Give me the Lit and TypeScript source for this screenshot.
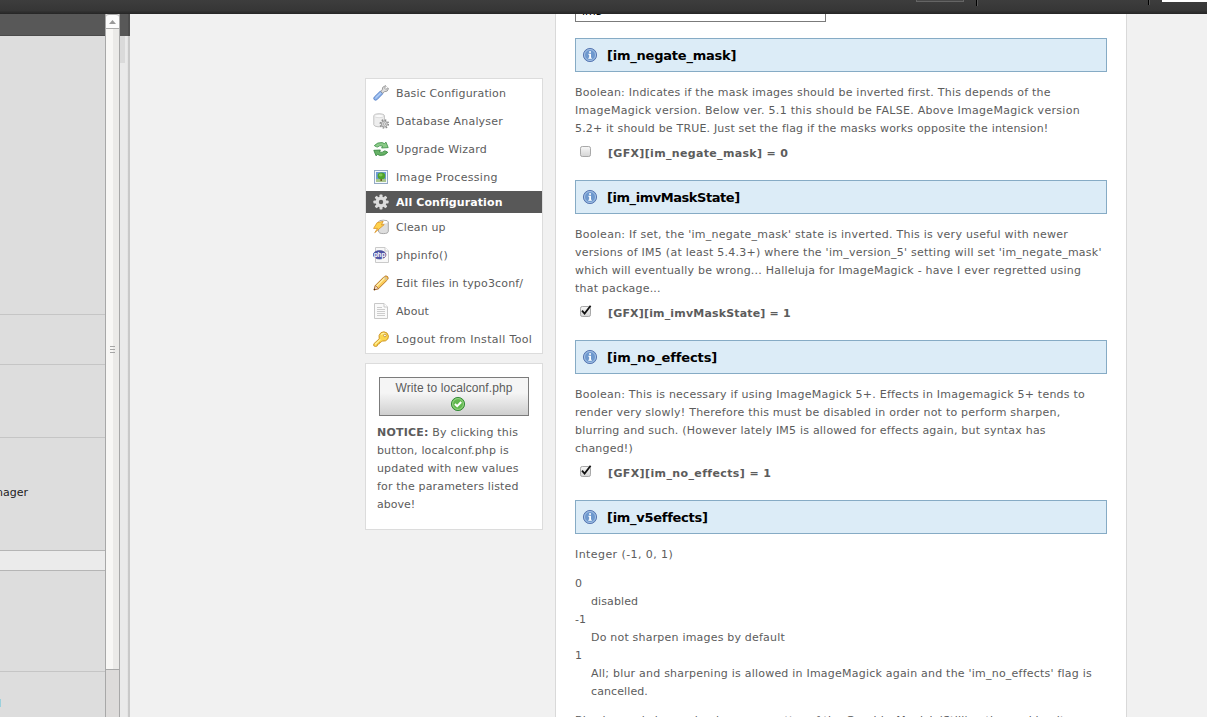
import { LitElement, html, css, svg } from "lit";
import { customElement, property } from "lit/decorators.js";
import { styleMap } from "lit/directives/style-map.js";

const icons: Record<string, unknown> = {
  wrench: svg`<path d="M1.2 12.2 L7.3 6.2 L9.8 8.7 L3.8 14.8 Q2.4 15.6 1.2 14.6 Q.3 13.4 1.2 12.2Z" fill="#8fb5ec" stroke="#5a82c8"/><path d="M2.5 13 L7.8 7.9" stroke="#c5dcfa"/><path d="M7.8 6.4 L9.2 4.9 Q8.6 1.8 12.6 .6 L13.2 1.2 L11.5 3 L12.8 4.4 L15 2.8 L15.6 3.4 Q15 7 11.2 6.8 L9.7 8.2Z" fill="#dedede" stroke="#8c8c8c" stroke-width=".8"/>`,
  database: svg`<path d="M.8 3 Q1 .8 6 .8 Q11.4 .8 11.4 3 V12.3 Q9 14.2 5 13.8 Q.8 13.3 .8 11.8Z" fill="#eee" stroke="#c2c2c2"/><ellipse cx="6.1" cy="3" rx="4.7" ry="1.7" fill="#fafafa" stroke="#ccc" stroke-width=".6"/><circle cx="11.3" cy="11" r="4" fill="none" stroke="#8d8d8d" stroke-width="1.6" stroke-dasharray="1.57 1.57"/><circle cx="11.3" cy="11" r="3" fill="#ddd" stroke="#8d8d8d" stroke-width=".8"/><circle cx="11.3" cy="11" r="1.2" fill="#fff" stroke="#888" stroke-width=".7"/>`,
  refresh: svg`<path d="M1.3 4.6 Q4.5 .9 9.2 1.6 L11.4 2.6 L13 1.2 L15.2 6.6 L8.6 7 L9.6 5.2 Q6.8 3.6 4.6 6 Q3.4 6.2 1.3 4.6Z" fill="#8bcb88" stroke="#3a8b42" stroke-width=".8"/><path d="M14.8 11.3 Q11.6 15.2 6.8 14.4 L4.6 13.4 L3 14.8 L.8 9.3 L7.4 9 L6.4 10.8 Q9.2 12.4 11.4 9.9 Q12.6 9.7 14.8 11.3Z" fill="#67b266" stroke="#2f8139" stroke-width=".8"/>`,
  image: svg`<rect x="1.5" y="1.5" width="13" height="13" fill="#f4f8fc" stroke="#93a9c4"/><rect x="3" y="3" width="10" height="10" fill="#6e9cd6"/><path d="M3 10 H13 V13 H3Z" fill="#a9c58c"/><path d="M7.4 9 H9 V12 H7.4Z" fill="#6b5e28"/><ellipse cx="8.4" cy="6.9" rx="3.8" ry="3.3" fill="#4ea32c"/><ellipse cx="7.7" cy="6" rx="1.9" ry="1.4" fill="#80c852"/>`,
  gear: svg`<g fill="#ddd"><circle cx="8" cy="8" r="5.4"/>${[0, 45, 90, 135, 180, 225, 270, 315].map((a) => svg`<rect x="6.5" y=".4" width="3" height="4" rx=".8" transform="rotate(${a} 8 8)"/>`)}</g><circle cx="8" cy="8" r="2.2" fill="#595959"/>`,
  cleanup: svg`<path d="M5.5 3 Q5.5 1.2 10.3 1.2 Q15.3 1.2 15.3 3 V12.2 Q15.3 14.6 10.3 14.6 Q5.5 14.6 5.5 12Z" fill="#dedede" stroke="#a8a8a8"/><ellipse cx="10.4" cy="3.2" rx="4.2" ry="1.4" fill="#fff"/><path d="M4.2 3.6 L10.2 2.4 L8.4 5.8 L11.2 5.6 L1.8 13.6 L4.6 9.4 L.6 9.4Z" fill="#ffd24c" stroke="#dc9a30" stroke-width=".9"/>`,
  php: svg`<path d="M2.5 .5 H12 L15.5 4 V15.5 H2.5Z" fill="#f8f8f8" stroke="#cacaca"/><path d="M12 .5 V4 H15.5" fill="#fff" stroke="#cacaca"/><ellipse cx="6.6" cy="7.8" rx="6.4" ry="4.2" fill="#4f55a6" stroke="#3a3f8e" stroke-width=".6"/><text x="6.6" y="9.8" text-anchor="middle" font-family="Liberation Sans" font-size="6.5" font-weight="700" fill="#fff">php</text>`,
  pencil: svg`<path d="M1 15 L2.4 10.4 L11.2 1.6 Q13 .2 14.6 1.6 Q15.9 3.2 14.4 4.9 L5.6 13.6Z" fill="#fbcb58" stroke="#b06c1d" stroke-width=".9"/><path d="M3.5 11.2 L11.7 3" stroke="#fff0a8" stroke-width="1.4"/><path d="M11 1.8 L14.2 5" stroke="#d3c3a0" stroke-width="1.5"/><path d="M2.4 10.4 L5.6 13.6 L1 15Z" fill="#f3dcc4" stroke="#9d6030" stroke-width=".7"/><path d="M.8 15.2 L1.4 13.4 L2.6 14.6Z" fill="#332111"/>`,
  page: svg`<path d="M1.5 .5 H11 L14.5 4 V15.5 H1.5Z" fill="#fafafa" stroke="#c8c8c8"/><path d="M11 .5 V4 H14.5" fill="#fff" stroke="#c8c8c8"/><path d="M4 4.5 H9 M4 6.5 H12 M4 8.5 H12 M4 10.5 H12 M4 12.5 H12" stroke="#cdcdcd"/>`,
  key: svg`<path d="M6.2 7.8 Q5.1 3.9 8 1.6 Q11 -.2 14 2 Q16.5 5 14.8 8 Q12.7 10.8 9.3 10 L8 11.3 L6.5 11.5 L6.2 13 L4.6 13.2 L4.3 14.9 L2.4 15.6 L.7 14.7 L.8 12.8Z" fill="#fbd64e" stroke="#c98f24" stroke-width=".9"/><path d="M8.2 3.6 Q10 1.7 12.5 3 M2.2 13.3 L7.4 8.4" fill="none" stroke="#fff2a0" stroke-width="1.2"/><circle cx="11.9" cy="4.5" r="1.3" fill="#fff" stroke="#b77f20" stroke-width=".7"/>`,
  info: svg`<circle cx="8" cy="8" r="6.6" fill="#6d98ce" stroke="#5272ae" stroke-width=".9"/><circle cx="8" cy="8" r="5.5" fill="none" stroke="#b4cbe8" stroke-width=".8"/><path d="M7.1 4.3 H9 V5.8 H7.1Z M6.4 6.8 H9 V10.8 H9.8 V11.8 H6.3 V10.8 H7.2 V7.7 H6.4Z" fill="#fff"/>`,
  ok: svg`<circle cx="8" cy="8" r="6.6" fill="#62b84f" stroke="#2d8531" stroke-width=".9"/><circle cx="8" cy="8" r="5.4" fill="none" stroke="#a3da93" stroke-width=".8"/><path d="M4.9 8 L7.2 10.2 L11.2 6" fill="none" stroke="#fff" stroke-width="2"/>`,
};

@customElement("ui-icon")
class UiIcon extends LitElement {
  @property() name = "";
  static styles = css`
    :host { display: block; width: 16px; height: 16px; flex: none; }
    svg { display: block; }
  `;
  render() {
    return html`<svg width="16" height="16" viewBox="0 0 16 16" fill="none">${icons[this.name]}</svg>`;
  }
}

@customElement("tick-box")
class TickBox extends LitElement {
  @property({ type: Boolean }) on = false;
  static styles = css`
    :host { display: block; width: 14px; height: 14px; flex: none; }
    svg { display: block; overflow: visible; }
  `;
  render() {
    return html`<svg width="14" height="14" viewBox="0 0 14 14" fill="none">
      <defs><linearGradient id="g" x2="0" y2="1"><stop stop-color="#f8f8f8"/><stop offset="1" stop-color="#d5d5d5"/></linearGradient></defs>
      <rect x="1.5" y="1.5" width="10" height="10" rx="1.8" fill="url(#g)" stroke="#a8a8a8"/>
      ${this.on ? svg`<path d="M3 5.6 L5.6 8.6 L11.6 .8" stroke="#111" stroke-width="1.8"/>` : ""}
    </svg>`;
  }
}

/** A line of text with its tracking in pixels. */
type Line = [text: string, tracking: number];
interface Setting { name: string; lines: Line[]; value: number; head: number; label: number; }

const line = ([text, tracking]: Line) => html`<span class="line" style=${styleMap({ letterSpacing: `${tracking}px` })}>${text}</span>`;

@customElement("app-root")
class AppRoot extends LitElement {
  menu: [string, Line][] = [
    ["wrench", ["Basic Configuration", 0.15]], ["database", ["Database Analyser", 0.18]], ["refresh", ["Upgrade Wizard", 0.2]],
    ["image", ["Image Processing", 0.32]], ["gear", ["All Configuration", 0.1]], ["cleanup", ["Clean up", 0.12]], ["php", ["phpinfo()", 0.2]],
    ["pencil", ["Edit files in typo3conf/", 0.17]], ["page", ["About", 0.1]], ["key", ["Logout from Install Tool", 0.33]],
  ];
  notice: Line[] = [["button, localconf.php is", 0.14], ["updated with new values", 0.15], ["for the parameters listed", 0.17], ["above!", 0]];
  settings: Setting[] = [
    { name: "im_negate_mask", value: 0, head: -0.22, label: 0.33, lines: [["Boolean: Indicates if the mask images should be inverted first. This depends of the", 0.22], ["ImageMagick version. Below ver. 5.1 this should be FALSE. Above ImageMagick version", 0.29], ["5.2+ it should be TRUE. Just set the flag if the masks works opposite the intension!", 0.18]] },
    { name: "im_imvMaskState", value: 1, head: -0.45, label: 0.17, lines: [["Boolean: If set, the 'im_negate_mask' state is inverted. This is very useful with newer", 0.26], ["versions of IM5 (at least 5.4.3+) where the 'im_version_5' setting will set 'im_negate_mask'", 0.25], ["which will eventually be wrong... Halleluja for ImageMagick - have I ever regretted using", 0.21], ["that package...", 0.2]] },
    { name: "im_no_effects", value: 1, head: -0.1, label: 0.38, lines: [["Boolean: This is necessary if using ImageMagick 5+. Effects in Imagemagick 5+ tends to", 0.23], ["render very slowly! Therefore this must be disabled in order not to perform sharpen,", 0.23], ["blurring and such. (However lately IM5 is allowed for effects again, but syntax has", 0.21], ["changed!)", 0.2]] },
  ];

  static styles = css`
    :host { display: flex; flex-direction: column; width: 1207px; height: 717px; overflow: hidden; background: #f1f1f1; color: #5c5c5c; font: 11px/18px Verdana, "DejaVu Sans", sans-serif; white-space: nowrap; }
    * { box-sizing: border-box; }
    .top { height: 14px; flex: none; display: flex; background: linear-gradient(#3d3d3d, #363636 75%, #252525); }
    .field { width: 48px; height: 2px; margin-left: 916px; background: #484848; border: 1px solid #656565; border-top: 0; }
    .sep { width: 2px; height: 6px; margin-left: 12px; background: #000; border-right: 1px solid #585858; }
    .sep2 { height: 5px; margin-left: 170px; }
    .search { width: 45px; height: 2px; margin-left: 12px; background: #fff; }
    .body { flex: 1; min-height: 0; display: flex; }
    .nav { width: 105px; display: flex; flex-direction: column; background: #ddd; color: #222; }
    .nav > div { flex: none; border-bottom: 1px solid #c5c5c5; }
    .nav .head { height: 22px; background: #585858; border-bottom: 1px solid #4a4a4a; }
    .n1 { height: 279px; }
    .n2 { height: 50px; }
    .n3 { height: 73px; }
    .nav .n4 { height: 113px; padding-top: 46px; border-color: #b5b5b5; display: flex; justify-content: flex-end; padding-right: 77px; }
    .nav .gap { height: 20px; background: #ebebeb; border-color: #b5b5b5; }
    .n6 { height: 101px; }
    .nav .n7 { height: 45px; border: 0; padding-top: 27px; }
    .mark { width: 1px; height: 8px; background: #9bd0dc; }
    .scroll { width: 15px; display: flex; flex-direction: column; border: solid #a8a8a8; border-width: 0 1px; background: #dddbda; }
    .up { height: 15px; flex: none; background: #fcfcfc; border: 1px solid #aaa; border-width: 1px 0; border-radius: 3px 3px 0 0; display: flex; align-items: center; justify-content: center; }
    .thumb { height: 641px; flex: none; display: flex; flex-direction: column; align-items: center; justify-content: center; gap: 2px; background: linear-gradient(90deg, #f8f7f5 7px, #ebeae8 7px); border-bottom: 1px solid #a8a8a8; }
    .thumb i { width: 5px; height: 1px; background: #a5a5a5; }
    .edge { width: 10px; background: linear-gradient(90deg, #eaeaea 7px, #dfdfdf 8px, #c9c9c9 8px); }
    .edge1 { height: 22px; background: linear-gradient(90deg, #585858 8px, #4d4d4d 8px); }
    .edge2 { width: 5px; height: 27px; background: #dadada; }
    .side { margin: 64px 0 0 235px; width: 178px; display: flex; flex-direction: column; gap: 9px; flex: none; }
    .box { background: #fff; border: 1px solid #dcdcdc; }
    .line { display: block; }
    .menu { height: 276px; }
    .item { height: 28px; padding-left: 7px; display: flex; align-items: center; gap: 7px; }
    .item .line, .h .line { padding-top: 2px; }
    .item.cur { height: 22px; background: #585858; color: #fff; font-weight: 700; }
    .write { height: 167px; padding: 13px 11px; }
    .btn { width: 150px; height: 39px; margin: 0 0 8px 2px; border: 1px solid #7b7b7b; background: linear-gradient(#f5f5f5 40%, #cfcfcf); display: flex; flex-direction: column; align-items: center; font: 12px/15px "Liberation Sans", sans-serif; letter-spacing: .08px; padding-top: 3px; }
    .btn ui-icon { margin-left: 8px; }
    .n-first { letter-spacing: .2px; }
    .main { margin-left: 12px; width: 572px; flex: none; background: #fff; border: solid #d9d9d9; border-width: 0 1px; padding: 0 19px; overflow: hidden; }
    .input { width: 251px; height: 8px; border: 1px solid #7b7b7b; border-top: 0; margin-bottom: 16px; overflow: hidden; display: flex; align-items: flex-end; padding: 0 6px; color: #000; }
    .h { height: 34px; width: 532px; border: 1px solid #86abc5; background: #dcecf7; color: #000; font-weight: 700; font-size: 13px; display: flex; align-items: center; gap: 9px; padding-left: 6px; }
    .text { margin: 12px 0 0; }
    .check { height: 18px; margin: 7px 0 17px 4px; display: flex; gap: 15px; font-weight: 700; }
    dl { margin: 11px 0; }
    dd { margin: 0 0 0 16px; }
  `;

  heading(name: string, tracking: number) {
    return html`<div class="h"><ui-icon name="info"></ui-icon>${line([`[${name}]`, tracking])}</div>`;
  }

  render() {
    return html`
      <div class="top"><div class="field"></div><div class="sep"></div><div class="sep sep2"></div><div class="search"></div></div>
      <div class="body">
        <div class="nav">
          <div class="head"></div><div class="n1"></div><div class="n2"></div><div class="n3"></div>
          <div class="n4">Extension Manager</div><div class="gap"></div><div class="n6"></div>
          <div class="n7"><div class="mark"></div></div>
        </div>
        <div class="scroll">
          <div class="up"><svg width="7" height="4" viewBox="0 0 7 4"><path d="M0 4 L3.5 0 L7 4Z" fill="#999"/></svg></div>
          <div class="thumb"><i></i><i></i><i></i></div>
        </div>
        <div class="edge"><div class="edge1"></div><div class="edge2"></div></div>
        <div class="side">
          <div class="box menu">
            ${this.menu.map(([icon, label]) => html`<div class="item ${icon === "gear" ? "cur" : ""}"><ui-icon name=${icon}></ui-icon>${line(label)}</div>`)}
          </div>
          <div class="box write">
            <div class="btn"><span>Write to localconf.php</span><ui-icon name="ok"></ui-icon></div>
            <div class="n-first"><b>NOTICE:</b> By clicking this</div>
            ${this.notice.map(line)}
          </div>
        </div>
        <div class="main">
          <div class="input"><span>im5</span></div>
          ${this.settings.map((s) => html`
            ${this.heading(s.name, s.head)}
            <div class="text">${s.lines.map(line)}</div>
            <div class="check"><tick-box ?on=${s.value === 1}></tick-box>${line([`[GFX][${s.name}] = ${s.value}`, s.label])}</div>
          `)}
          ${this.heading("im_v5effects", -0.28)}
          <div class="text">${line(["Integer (-1, 0, 1)", 0.42])}</div>
          <dl>
            <dt>0</dt><dd>${line(["disabled", 0.1])}</dd>
            <dt>-1</dt><dd>${line(["Do not sharpen images by default", 0.2])}</dd>
            <dt>1</dt><dd>${line(["All; blur and sharpening is allowed in ImageMagick again and the 'im_no_effects' flag is", 0.22])}${line(["cancelled.", 0.1])}</dd>
          </dl>
          ${line(["Blurring and sharpening is now a matter of the GraphicsMagick 'Still' option making it", 0.2])}
        </div>
      </div>`;
  }
}
